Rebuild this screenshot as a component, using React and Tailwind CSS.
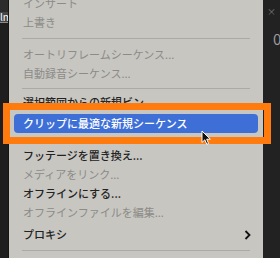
import React from 'react';

const font = { fontFamily: '"Noto Sans CJK JP", "Noto Sans", sans-serif' };

const Item = ({ label, disabled, className = 'h-[19px]' }) => (
  <div
    className={`${className} flex items-center pl-[14px] text-[11px] leading-none whitespace-nowrap ${
      disabled ? 'text-[#8c8b88]' : 'text-[#222222] font-medium'
    }`}
  >
    {label}
  </div>
);

const Sep = ({ className = 'h-[13px]' }) => (
  <div className={`${className} flex items-center mx-[13px]`}>
    <div className="h-px w-full bg-[#abaaa6]" />
  </div>
);

const Cursor = () => (
  <svg width="11" height="16" viewBox="0 0 11 16" className="absolute left-[201px] top-[130px]">
    <path d="M1 1 L1 12.5 L3.8 9.8 L5.8 14.3 L7.6 13.5 L5.7 9.2 L9.4 9.2 Z" fill="#111" stroke="#fff" strokeWidth="1" strokeLinejoin="round" />
  </svg>
);

const App = () => {
  return (
    <div className="relative w-[280px] h-[258px] overflow-hidden flex bg-[#1d1d1d]" style={font}>
      {/* left panel edge */}
      <div className="w-[9px] shrink-0 flex flex-col border-r border-[#151515]">
        <div className="h-[12px] bg-[#2c2c2c]" />
        <div className="h-[11px] bg-[#454545] border-b border-[#8a8a8a] text-[10px] leading-[10px] text-white overflow-hidden whitespace-nowrap">
          lm
        </div>
        <div className="flex-1 bg-[#1e1e1e]" />
      </div>

      {/* context menu */}
      <div className="w-[254px] shrink-0 bg-[#c7c6c1] flex flex-col -mt-[6px]">
        <Item label="インサート" disabled />
        <Item label="上書き" disabled />
        <Sep />
        <Item label="オートリフレームシーケンス..." disabled />
        <Item label="自動録音シーケンス..." disabled />
        <Sep className="h-[11px]" />
        <Item label="選択範囲からの新規ビン" className="h-[17px]" />
        <div className="mt-[3px] mx-[5px] h-[19px] rounded-[4px] bg-[#3e6fd7] flex items-center pl-[9px] text-[11px] leading-none text-white font-medium whitespace-nowrap">
          クリップに最適な新規シーケンス
        </div>
        <Sep />
        <Item label="フッテージを置き換え..." />
        <Item label="メディアをリンク..." disabled />
        <Item label="オフラインにする..." />
        <Item label="オフラインファイルを編集..." disabled />
        <div className="mt-[3px] h-[19px] flex items-center justify-between pl-[14px] pr-[12px] text-[11px] leading-none text-[#222222] font-medium">
          <span>プロキシ</span>
          <svg width="7" height="10" viewBox="0 0 7 10">
            <path d="M1.5 1 L5.5 5 L1.5 9" fill="none" stroke="#111" strokeWidth="1.8" />
          </svg>
        </div>
        <Sep />
      </div>

      {/* right panel edge */}
      <div className="flex-1 bg-[#222222] relative">
        <span className="absolute left-[4px] top-[7px] text-[9px] leading-none text-[#7a7a7a]">×</span>
        <span className="absolute left-[10px] top-[31px] text-[15px] leading-none text-[#9a9a9a]">0</span>
      </div>

      {/* annotation */}
      <div className="absolute left-[3px] top-[103px] w-[268px] h-[41px] border-[7px] border-[#ff7b0e]" />
      <Cursor />
    </div>
  );
};

export default App;
